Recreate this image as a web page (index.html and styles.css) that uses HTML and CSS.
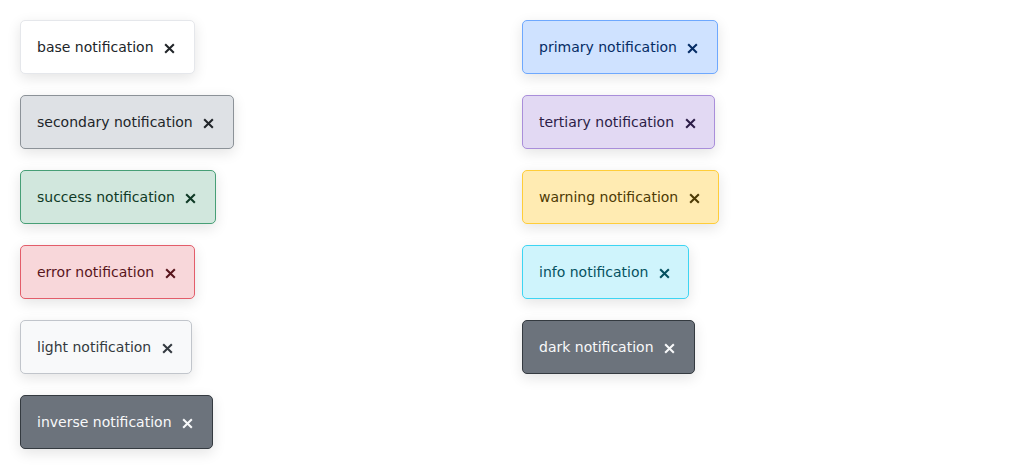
FILE: index.html
```html
<!DOCTYPE html>
<html>
<head>
<meta charset="utf-8">
<link rel="stylesheet" href="styles.css">
</head>
<body>
<div class="grid">
  <div class="col">
    <div class="note base"><span>base notification</span><button class="close" aria-label="close"><svg viewBox="0 0 12 12"><path d="M2 2 10 10M10 2 2 10"/></svg></button></div>
    <div class="note secondary"><span>secondary notification</span><button class="close" aria-label="close"><svg viewBox="0 0 12 12"><path d="M2 2 10 10M10 2 2 10"/></svg></button></div>
    <div class="note success"><span>success notification</span><button class="close" aria-label="close"><svg viewBox="0 0 12 12"><path d="M2 2 10 10M10 2 2 10"/></svg></button></div>
    <div class="note error"><span>error notification</span><button class="close" aria-label="close"><svg viewBox="0 0 12 12"><path d="M2 2 10 10M10 2 2 10"/></svg></button></div>
    <div class="note light"><span>light notification</span><button class="close" aria-label="close"><svg viewBox="0 0 12 12"><path d="M2 2 10 10M10 2 2 10"/></svg></button></div>
    <div class="note inverse"><span>inverse notification</span><button class="close" aria-label="close"><svg viewBox="0 0 12 12"><path d="M2 2 10 10M10 2 2 10"/></svg></button></div>
  </div>
  <div class="col">
    <div class="note primary"><span>primary notification</span><button class="close" aria-label="close"><svg viewBox="0 0 12 12"><path d="M2 2 10 10M10 2 2 10"/></svg></button></div>
    <div class="note tertiary"><span>tertiary notification</span><button class="close" aria-label="close"><svg viewBox="0 0 12 12"><path d="M2 2 10 10M10 2 2 10"/></svg></button></div>
    <div class="note warning"><span>warning notification</span><button class="close" aria-label="close"><svg viewBox="0 0 12 12"><path d="M2 2 10 10M10 2 2 10"/></svg></button></div>
    <div class="note info"><span>info notification</span><button class="close" aria-label="close"><svg viewBox="0 0 12 12"><path d="M2 2 10 10M10 2 2 10"/></svg></button></div>
    <div class="note dark"><span>dark notification</span><button class="close" aria-label="close"><svg viewBox="0 0 12 12"><path d="M2 2 10 10M10 2 2 10"/></svg></button></div>
  </div>
</div>
</body>
</html>
```
FILE: styles.css
```css
html, body { margin: 0; padding: 0; background: #fff; }
body { font-family: "DejaVu Sans", sans-serif; font-size: 14px; }
.grid {
  display: grid;
  grid-template-columns: 1fr 1fr;
  column-gap: 20px;
  padding: 20px;
}
.col { display: flex; flex-direction: column; align-items: flex-start; gap: 21px; }
.note {
  display: flex;
  align-items: center;
  gap: 8px;
  padding: 16px;
  line-height: 20px;
  min-height: 54px;
  box-sizing: border-box;
  border: 1px solid;
  border-radius: 5px;
  box-shadow: 0 4px 14px rgba(0,0,0,0.11);
}
.close {
  width: 16px; height: 16px;
  padding: 0; margin: 2px 0 0;
  border: 0; background: transparent;
  display: flex; align-items: center; justify-content: center;
  color: inherit;
}
.close svg { width: 13px; height: 13px; }
.close path { stroke: currentColor; stroke-width: 1.9; fill: none; }
.base { background: #fff; border-color: #e5e7eb; color: #212529; }
.secondary { background: #dee1e5; border-color: #8c9298; color: #212529; }
.success { background: #d1e7dd; border-color: #479f76; color: #0f3a26; }
.error { background: #f8d7da; border-color: #e35d6a; color: #58151c; }
.light { background: #f8f9fa; border-color: #c1c5cb; color: #343a40; }
.inverse { background: #6c737c; border-color: #343a40; color: #f8f9fa; }
.primary { background: #cfe2ff; border-color: #6ea8fe; color: #052c65; }
.tertiary { background: #e2d9f3; border-color: #a98eda; color: #2c1d47; }
.warning { background: #ffebb2; border-color: #ffcd39; color: #4d3a05; }
.info { background: #cff4fc; border-color: #3dd5f3; color: #055160; }
.dark { background: #6c737c; border-color: #343a40; color: #f8f9fa; }
```
